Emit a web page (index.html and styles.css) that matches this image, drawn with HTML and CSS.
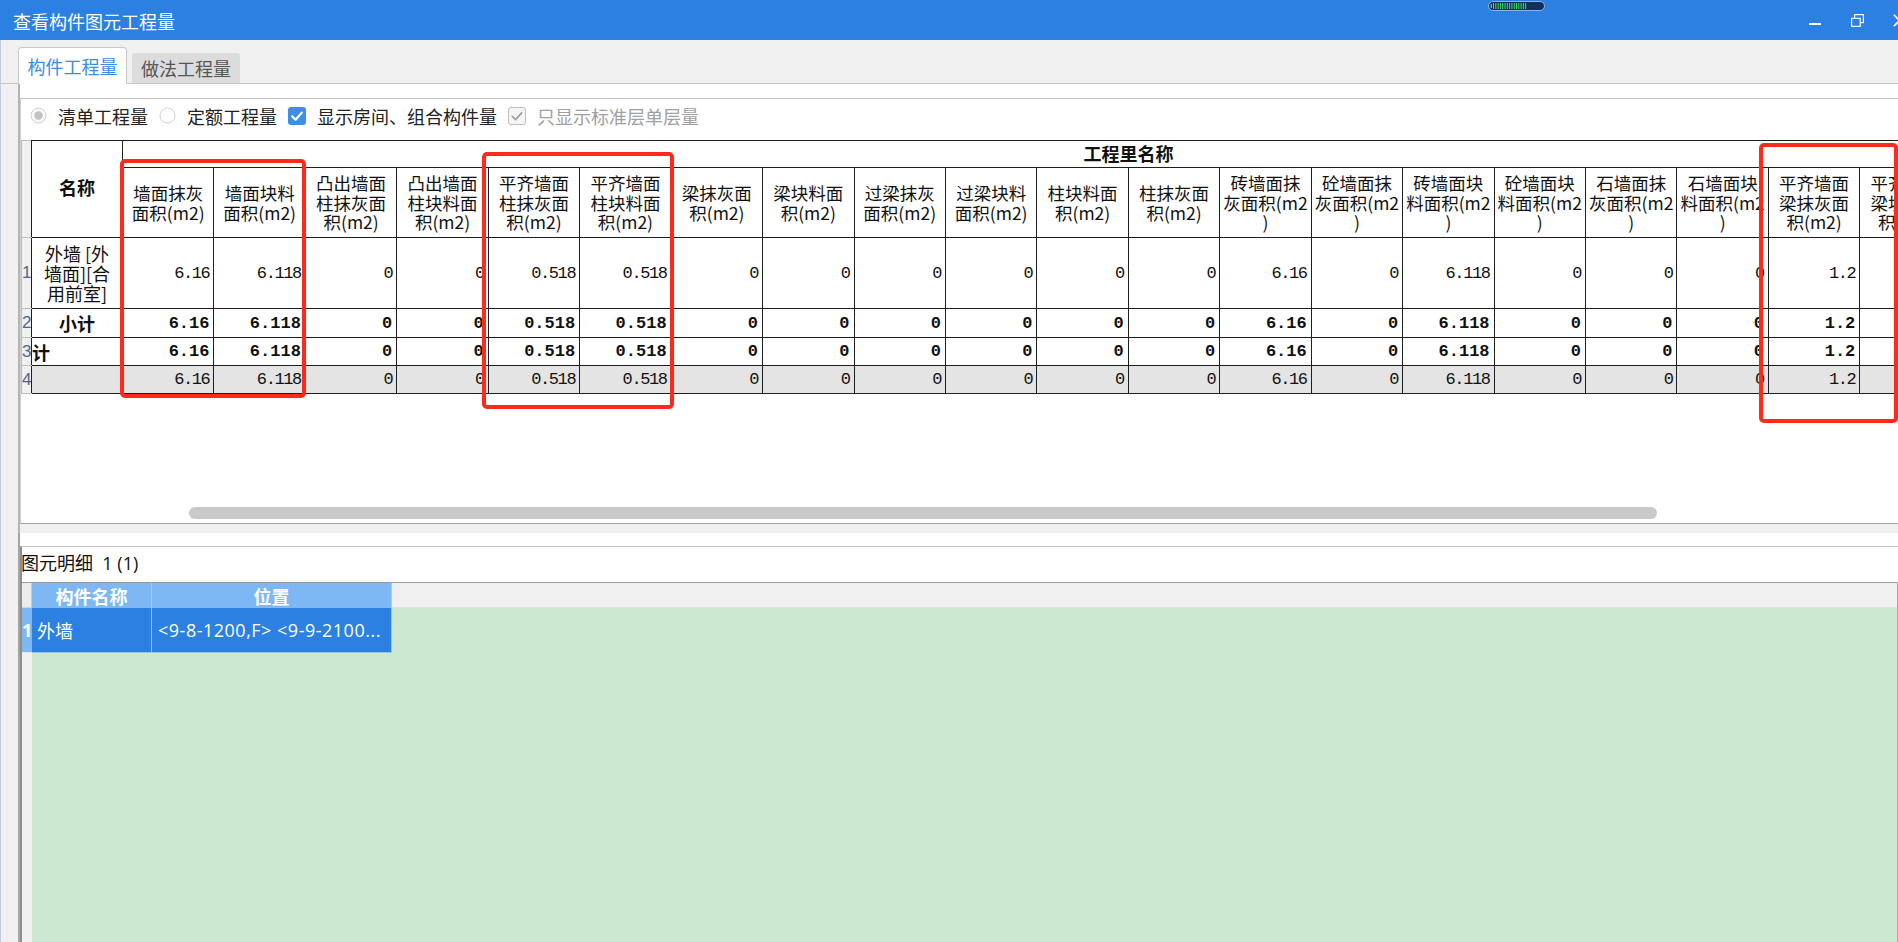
FILE: index.html
```html
<!DOCTYPE html>
<html lang="zh-CN">
<head>
<meta charset="utf-8">
<title>查看构件图元工程量</title>
<link rel="stylesheet" href="styles.css">
</head>
<body>
<div class="window">
  <header class="titlebar">
    <span class="title">查看构件图元工程量</span>
    <svg class="meter" width="57" height="10" viewBox="0 0 57 10">
      <rect x="0.5" y="0.5" width="56" height="9" rx="4.5" fill="#13305a" stroke="#8db3e2"/>
      <g fill="#3ee05b">
        <rect x="2.5" y="3" width="1.4" height="4"/>
        <rect x="5" y="2" width="1" height="6"/>
        <rect x="7.3" y="2" width="1" height="6"/>
        <rect x="9.6" y="2" width="1" height="6"/>
        <rect x="11.9" y="2" width="1" height="6"/>
        <rect x="14.2" y="2" width="1" height="6"/>
        <rect x="16.5" y="2" width="1" height="6"/>
        <rect x="18.8" y="2" width="1" height="6"/>
        <rect x="21.1" y="2" width="1" height="6"/>
        <rect x="23.4" y="2" width="1" height="6"/>
        <rect x="25.7" y="2" width="1" height="6"/>
        <rect x="28" y="2" width="1" height="6"/>
        <rect x="30.3" y="2" width="1" height="6"/>
        <rect x="32.6" y="2" width="1" height="6"/>
        <rect x="34.9" y="2" width="1" height="6"/>
        <rect x="37.2" y="2" width="1" height="6"/>
      </g>
    </svg>
    <div class="controls">
      <div class="ctl"><svg width="12" height="12" viewBox="0 0 12 12"><rect x="0" y="9" width="12" height="2" fill="#fff"/></svg></div>
      <div class="ctl"><svg width="13" height="13" viewBox="0 0 13 13"><rect x="3.6" y="0.6" width="8.8" height="8" fill="none" stroke="#fff" stroke-width="1.2"/><rect x="0.6" y="4.4" width="8.6" height="8" fill="#2c80e1" stroke="#fff" stroke-width="1.2"/></svg></div>
      <div class="ctl"><svg width="13" height="13" viewBox="0 0 13 13"><path d="M0.8 0.8 L12.2 12.2 M12.2 0.8 L0.8 12.2" stroke="#fff" stroke-width="1.6"/></svg></div>
    </div>
  </header>

  <nav class="tabs">
    <div class="tab active">构件工程量</div>
    <div class="tab inactive">做法工程量</div>
  </nav>

  <section class="upper">
    <div class="upper-inner">
      <div class="options">
        <label class="opt">
          <svg width="17" height="17" viewBox="0 0 17 17"><circle cx="8.5" cy="8.5" r="7.5" fill="#f7f7f7" stroke="#cfcfcf"/><circle cx="8.5" cy="8.5" r="4.2" fill="#c2c2c2"/></svg>
          <span>清单工程量</span>
        </label>
        <label class="opt">
          <svg width="17" height="17" viewBox="0 0 17 17"><circle cx="8.5" cy="8.5" r="7.5" fill="#fff" stroke="#cfcfcf"/></svg>
          <span>定额工程量</span>
        </label>
        <label class="opt">
          <svg width="18" height="18" viewBox="0 0 18 18"><rect x="0" y="0" width="18" height="18" rx="3" fill="#3e8ee8"/><path d="M4.2 9.4 L7.6 12.8 L13.8 5.6" stroke="#fff" stroke-width="2.2" fill="none" stroke-linecap="round" stroke-linejoin="round"/></svg>
          <span>显示房间、组合构件量</span>
        </label>
        <label class="opt disabled">
          <svg width="18" height="18" viewBox="0 0 18 18"><rect x="0.5" y="0.5" width="17" height="17" rx="2.5" fill="#f5f5f5" stroke="#bdbdbd"/><path d="M4.4 9.4 L7.6 12.6 L13.6 5.8" stroke="#a4a4a4" stroke-width="1.8" fill="none" stroke-linecap="round" stroke-linejoin="round"/></svg>
          <span>只显示标准层单层量</span>
        </label>
      </div>

      <div class="grid-wrap">
        <table class="qty">
          <colgroup>
            <col class="c-rn"><col class="c-name">
            <col class="c-d"><col class="c-d"><col class="c-d"><col class="c-d"><col class="c-d"><col class="c-d">
            <col class="c-d"><col class="c-d"><col class="c-d"><col class="c-d"><col class="c-d"><col class="c-d">
            <col class="c-d"><col class="c-d"><col class="c-d"><col class="c-d"><col class="c-d"><col class="c-d">
            <col class="c-d"><col class="c-d"><col class="c-d"><col class="c-d">
          </colgroup>
          <thead>
            <tr class="h1">
              <th class="rn" rowspan="2"></th>
              <th class="name-h" rowspan="2">名称</th>
              <th class="group" colspan="22">工程里名称</th>
            </tr>
            <tr class="h2">
              <th>墙面抹灰<br>面积(m2)</th>
              <th>墙面块料<br>面积(m2)</th>
              <th>凸出墙面<br>柱抹灰面<br>积(m2)</th>
              <th>凸出墙面<br>柱块料面<br>积(m2)</th>
              <th>平齐墙面<br>柱抹灰面<br>积(m2)</th>
              <th>平齐墙面<br>柱块料面<br>积(m2)</th>
              <th>梁抹灰面<br>积(m2)</th>
              <th>梁块料面<br>积(m2)</th>
              <th>过梁抹灰<br>面积(m2)</th>
              <th>过梁块料<br>面积(m2)</th>
              <th>柱块料面<br>积(m2)</th>
              <th>柱抹灰面<br>积(m2)</th>
              <th>砖墙面抹<br>灰面积(m2<br>)</th>
              <th>砼墙面抹<br>灰面积(m2<br>)</th>
              <th>砖墙面块<br>料面积(m2<br>)</th>
              <th>砼墙面块<br>料面积(m2<br>)</th>
              <th>石墙面抹<br>灰面积(m2<br>)</th>
              <th>石墙面块<br>料面积(m2<br>)</th>
              <th>平齐墙面<br>梁抹灰面<br>积(m2)</th>
              <th>平齐墙面<br>梁块料面<br>积(m2)</th>
              <th>平齐墙面<br>墙抹灰面<br>积(m2)</th>
              <th>平齐墙面<br>墙块料面<br>积(m2)</th>
            </tr>
          </thead>
          <tbody>
            <tr class="r1">
              <td class="rn">1</td>
              <td class="nm">外墙 [外<br>墙面][合<br>用前室]</td>
              <td>6.16</td><td>6.118</td><td>0</td><td>0</td><td>0.518</td><td>0.518</td>
              <td>0</td><td>0</td><td>0</td><td>0</td><td>0</td><td>0</td>
              <td>6.16</td><td>0</td><td>6.118</td><td>0</td><td>0</td><td>0</td>
              <td>1.2</td><td></td><td></td><td></td>
            </tr>
            <tr class="r2 sum">
              <td class="rn">2</td>
              <td class="nm">小计</td>
              <td>6.16</td><td>6.118</td><td>0</td><td>0</td><td>0.518</td><td>0.518</td>
              <td>0</td><td>0</td><td>0</td><td>0</td><td>0</td><td>0</td>
              <td>6.16</td><td>0</td><td>6.118</td><td>0</td><td>0</td><td>0</td>
              <td>1.2</td><td></td><td></td><td></td>
            </tr>
            <tr class="r3 sum">
              <td class="rn">3</td>
              <td class="nm left">计</td>
              <td>6.16</td><td>6.118</td><td>0</td><td>0</td><td>0.518</td><td>0.518</td>
              <td>0</td><td>0</td><td>0</td><td>0</td><td>0</td><td>0</td>
              <td>6.16</td><td>0</td><td>6.118</td><td>0</td><td>0</td><td>0</td>
              <td>1.2</td><td></td><td></td><td></td>
            </tr>
            <tr class="r4 total">
              <td class="rn">4</td>
              <td class="nm"></td>
              <td>6.16</td><td>6.118</td><td>0</td><td>0</td><td>0.518</td><td>0.518</td>
              <td>0</td><td>0</td><td>0</td><td>0</td><td>0</td><td>0</td>
              <td>6.16</td><td>0</td><td>6.118</td><td>0</td><td>0</td><td>0</td>
              <td>1.2</td><td></td><td></td><td></td>
            </tr>
          </tbody>
        </table>
      </div>

      <div class="hscroll"><div class="thumb"></div></div>
    </div>
  </section>

  <div class="splitter"></div>

  <section class="lower">
    <div class="lower-inner">
      <div class="label">图元明细&nbsp;&nbsp;1 (1)</div>
      <div class="detail">
        <div class="g-rn-h"></div>
        <div class="g-h">构件名称</div>
        <div class="g-h">位置</div>
        <div class="g-h-fill"></div>
        <div class="g-rn-sel">1</div>
        <div class="g-c">外墙</div>
        <div class="g-c pos">&lt;9-8-1200,F&gt; &lt;9-9-2100...</div>
        <div class="g-green"></div>
        <div class="g-rn-rest"></div>
        <div class="g-green wide"></div>
      </div>
    </div>
  </section>

  <div class="redbox rb1"></div>
  <div class="redbox rb2"></div>
  <div class="redbox rb3"></div>
</div>
</body>
</html>
```

FILE: styles.css
```css
* { box-sizing: border-box; }
html, body { margin: 0; padding: 0; }
body {
  width: 1898px;
  height: 942px;
  overflow: hidden;
  background: #f0f0f0;
  box-shadow: inset 1px 0 0 #c2cce0;
  font-family: "Noto Sans CJK SC", "Open Sans", sans-serif;
  color: #1a1a1a;
}
.window {
  position: relative;
  width: 1898px;
  height: 942px;
  display: flex;
  flex-direction: column;
}

/* title bar */
.titlebar {
  flex: none;
  position: relative;
  height: 40px;
  background: #2c80e1;
  color: #fff;
  display: flex;
  align-items: center;
  padding-left: 13px;
  overflow: hidden;
}
.title { font-size: 18px; line-height: 24px; padding-top: 2px; }
.meter { position: absolute; left: 1488px; top: 1px; }
.controls { margin-left: auto; margin-right: -22px; display: flex; height: 40px; }
.ctl { width: 42px; height: 40px; display: flex; align-items: center; justify-content: center; }
.ctl svg { display: block; }

/* tabs */
.tabs {
  flex: none;
  height: 44px;
  display: flex;
  align-items: flex-end;
  padding-left: 18px;
  border-bottom: 1px solid #c6c6c6;
}
.tab {
  font-size: 18px;
  display: flex;
  align-items: center;
  justify-content: center;
}
.tab.active {
  width: 109px;
  height: 37px;
  margin-bottom: -1px;
  background: #fff;
  color: #3a8ce6;
  border: 1px solid #c9c9c9;
  border-bottom: none;
  border-radius: 4px 4px 0 0;
}
.tab.inactive {
  width: 108px;
  height: 30px;
  margin-left: 5px;
  background: #dcdcdc;
  color: #555;
  border-radius: 3px 3px 0 0;
}

/* upper panel */
.upper {
  flex: none;
  height: 440px;
  margin-left: 18px;
  background: #fff;
  border-left: 2px solid #b4b4b4;
  padding-top: 14px;
  display: flex;
  flex-direction: column;
}
.upper-inner {
  flex: 1;
  min-height: 0;
  border-top: 1px solid #c4c4c4;
  border-left: 1px solid #d0d0d0;
  border-bottom: 1px solid #a3a3a3;
  display: flex;
  flex-direction: column;
}
.options {
  flex: none;
  height: 41px;
  padding-left: 9px;
  padding-bottom: 8px;
  display: flex;
  align-items: center;
  font-size: 18px;
  color: #222;
}
.opt { display: flex; align-items: center; gap: 11px; margin-right: 11px; line-height: 24px; }
.opt svg { display: block; flex: none; }
.opt.disabled { color: #a0a0a0; }

.grid-wrap { flex: 1; min-height: 0; overflow: hidden; }
.qty {
  border-collapse: collapse;
  table-layout: fixed;
  width: 2113px;
}
.c-rn { width: 10px; }
.c-name { width: 91px; }
.c-d { width: 91.45px; }
.qty th, .qty td {
  border: 1px solid #1f1f1f;
  padding: 0;
  overflow: hidden;
  white-space: nowrap;
}
.qty th {
  font-size: 17.5px;
  font-weight: normal;
  line-height: 19.5px;
  text-align: center;
  vertical-align: middle;
  color: #111;
}
.qty .h1 th { height: 27px; }
.qty .h2 th { height: 70px; }
.qty th.name-h, .qty th.group { font-weight: bold; font-size: 18px; }
.qty th.name-h { padding-bottom: 3px; }
.qty .rn {
  background: #f0f0f0;
  border-color: #bdbdbd;
  border-right-color: #1f1f1f;
  font-family: "Liberation Sans", sans-serif;
  font-size: 17px;
  color: #55658a;
  text-align: left;
  vertical-align: middle;
}
.qty td {
  font-family: "Liberation Mono", monospace;
  font-size: 17px;
  letter-spacing: -1.4px;
  text-align: right;
  vertical-align: middle;
  padding-right: 4px;
  color: #111;
}
.qty td.rn { padding: 0; letter-spacing: 0; font-weight: normal; }
.qty td.nm {
  font-family: "Noto Sans CJK SC", sans-serif;
  font-size: 18px;
  letter-spacing: 0;
  line-height: 20px;
  text-align: center;
  padding: 0;
}
.qty td.nm.left { text-align: left; }
.qty .r1 td { height: 71px; }
.qty .r2 td { height: 29px; }
.qty .r3 td, .qty .r4 td { height: 28px; }
.qty .sum td { font-weight: bold; letter-spacing: 0; }
.qty .sum td.rn { font-weight: normal; }
.qty .total td { background: #e4e4e4; }
.qty .total td.rn { background: #f0f0f0; }

.hscroll { flex: none; height: 12px; margin-bottom: 4px; padding-left: 168px; }
.thumb { width: 1468px; height: 12px; border-radius: 6px; background: #c9c9c9; }

.splitter {
  flex: none;
  height: 9px;
  margin-left: 18px;
  border-left: 2px solid #b4b4b4;
  background: #f0f0f0;
}

/* lower panel */
.lower {
  flex: 1;
  min-height: 0;
  margin-left: 18px;
  background: #fff;
  border-left: 2px solid #a4a4a4;
  padding-top: 13px;
  display: flex;
  flex-direction: column;
}
.lower-inner {
  flex: 1;
  min-height: 0;
  border-top: 1px solid #c8c8c8;
  border-left: 2px solid #8e8e8e;
  display: flex;
  flex-direction: column;
  font-family: "Open Sans", "Noto Sans CJK SC", sans-serif;
}
.label {
  flex: none;
  height: 35px;
  padding-bottom: 5px;
  display: flex;
  align-items: center;
  font-size: 18px;
  color: #111;
  margin-left: -1px;
}
.detail {
  flex: 1;
  min-height: 0;
  border-top: 1px solid #9c9c9c;
  border-right: 1px solid #a9a9a9;
  background: #cde8d0;
  display: grid;
  grid-template-columns: 10px 120px 240px 1fr;
  grid-template-rows: 25px 45px 1fr;
  font-size: 18px;
}
.g-rn-h { background: #ececec; border-right: 1px solid #c9c9c9; border-bottom: 1px solid #d4d4d4; }
.g-h {
  background: #7db8f5;
  color: #fff;
  font-weight: bold;
  display: flex;
  align-items: center;
  justify-content: center;
  border-right: 1px solid #a9c6e6;
  font-family: "Noto Sans CJK SC", sans-serif;
}
.g-h-fill { background: #f0f0f0; border-bottom: 1px solid #e0e0e0; }
.g-rn-sel {
  background: #7db8f5;
  color: #fff;
  font-weight: bold;
  display: flex;
  align-items: center;
  border-bottom: 1px solid #e8e8e8;
}
.g-c {
  background: #2c80e1;
  color: #fff;
  display: flex;
  align-items: center;
  padding-left: 5px;
  border-right: 1px solid #9cc3ee;
  border-bottom: 1px solid #9cc3ee;
  white-space: nowrap;
  overflow: hidden;
}
.g-c.pos { padding-left: 6px; letter-spacing: 0.5px; }
.g-rn-rest { background: #f0f0f0; }
.g-green.wide { grid-column: 2 / 5; }

/* annotation boxes */
.redbox {
  position: absolute;
  border: 4px solid #ff2a1a;
  border-radius: 5px;
}
.rb1 { left: 120px; top: 159px; width: 186px; height: 239px; }
.rb2 { left: 482px; top: 152px; width: 192px; height: 257px; }
.rb3 { left: 1759px; top: 143px; width: 139px; height: 280px; }
```
